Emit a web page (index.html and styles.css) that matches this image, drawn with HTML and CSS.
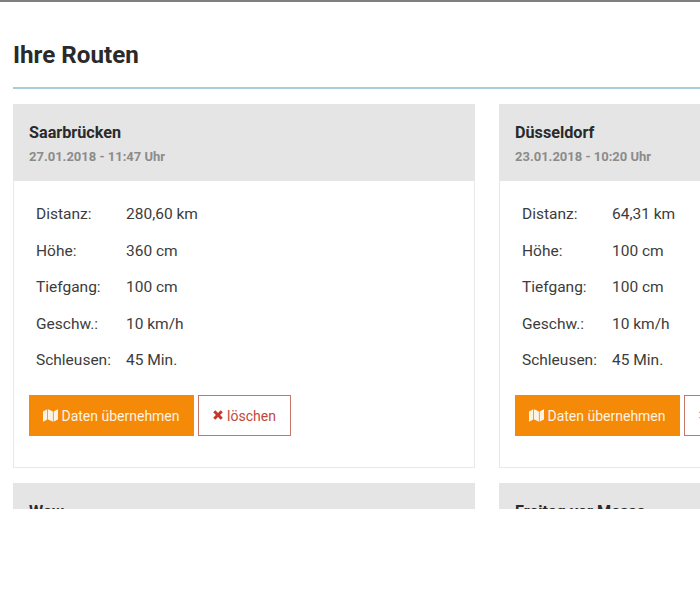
FILE: index.html
```html
<!DOCTYPE html>
<html lang="de">
<head>
<meta charset="utf-8">
<title>Ihre Routen</title>
<link rel="stylesheet" href="styles.css">
</head>
<body>
<main class="page">
  <h1 class="title">Ihre Routen</h1>
  <div class="grid">
    <article class="card">
      <header class="card-head"><h2>Saarbrücken</h2><p>27.01.2018 - 11:47 Uhr</p></header>
      <div class="card-body">
        <dl class="facts">
          <dt>Distanz:</dt><dd>280,60 km</dd>
          <dt>Höhe:</dt><dd>360 cm</dd>
          <dt>Tiefgang:</dt><dd>100 cm</dd>
          <dt>Geschw.:</dt><dd>10 km/h</dd>
          <dt>Schleusen:</dt><dd>45 Min.</dd>
        </dl>
        <div class="actions">
          <button class="btn primary"><svg class="icon-map" viewBox="0 0 15 13"><path d="M0 2.400C1.300 1.800 2.600 1 4.200.2v10.300C2.600 11.300 1.300 12.100 0 12.700zM5 .2C6.700.8 8.300 1.700 9.900 2.500v10.300C8.300 12 6.700 11.100 5 10.500zM10.700 2.500C12.200 1.700 13.600 .9 15 .2v10.300c-1.400.7-2.800 1.500-4.300 2.300z"/></svg><span class="label">Daten übernehmen</span></button>
          <button class="btn danger"><svg class="icon-x" viewBox="0 0 10 10"><path d="M2.300.2 5 2.900 7.700.2 9.800 2.300 7.100 5l2.700 2.700-2.100 2.100L5 7.100 2.300 9.800.2 7.700 2.900 5 .2 2.300z"/></svg><span class="label">löschen</span></button>
        </div>
      </div>
    </article>
    <article class="card">
      <header class="card-head"><h2>Düsseldorf</h2><p>23.01.2018 - 10:20 Uhr</p></header>
      <div class="card-body">
        <dl class="facts">
          <dt>Distanz:</dt><dd>64,31 km</dd>
          <dt>Höhe:</dt><dd>100 cm</dd>
          <dt>Tiefgang:</dt><dd>100 cm</dd>
          <dt>Geschw.:</dt><dd>10 km/h</dd>
          <dt>Schleusen:</dt><dd>45 Min.</dd>
        </dl>
        <div class="actions">
          <button class="btn primary"><svg class="icon-map" viewBox="0 0 15 13"><path d="M0 2.400C1.300 1.800 2.600 1 4.200.2v10.300C2.600 11.300 1.300 12.100 0 12.700zM5 .2C6.700.8 8.300 1.700 9.900 2.500v10.300C8.300 12 6.700 11.100 5 10.500zM10.700 2.500C12.200 1.700 13.600 .9 15 .2v10.300c-1.400.7-2.800 1.500-4.300 2.300z"/></svg><span class="label">Daten übernehmen</span></button>
          <button class="btn danger"><svg class="icon-x" viewBox="0 0 10 10"><path d="M2.300.2 5 2.900 7.700.2 9.800 2.300 7.100 5l2.700 2.700-2.100 2.100L5 7.100 2.300 9.800.2 7.700 2.900 5 .2 2.300z"/></svg><span class="label">löschen</span></button>
        </div>
      </div>
    </article>
    <article class="card">
      <header class="card-head"><h2>Wow</h2></header>
    </article>
    <article class="card">
      <header class="card-head"><h2>Freitag vor Messe</h2></header>
    </article>
  </div>
</main>
</body>
</html>
```

FILE: styles.css
```css
html, body {
  margin: 0;
  padding: 0;
  background: #fff;
}
body {
  font-family: Roboto, "Liberation Sans", sans-serif;
  color: #2a2a2a;
  width: 700px;
  height: 600px;
  overflow: hidden;
}
.page {
  box-sizing: border-box;
  height: 509px;
  overflow: hidden;
  border-top: 2px solid #7f7f7f;
  padding: 0 0 0 13px;
}
.title {
  margin: 0 0 15px;
  padding: 37px 0 16px;
  height: 32px;
  line-height: 32px;
  font-size: 24.200px;
  font-weight: 700;
  color: #2a2a2a;
  border-bottom: 2px solid #a9cddd;
}
.grid {
  display: grid;
  grid-template-columns: 462px 462px;
  column-gap: 24px;
  row-gap: 15px;
}
.card-head {
  background: #e5e5e5;
  height: 77px;
  box-sizing: border-box;
  padding: 19px 16px 0;
}
.card-head h2 {
  margin: 0;
  font-size: 16.200px;
  line-height: 20px;
  font-weight: 700;
  color: #2a2a2a;
}
.card-head p {
  margin: 6px 0 0;
  font-size: 13px;
  line-height: 16px;
  font-weight: 700;
  color: #8b8b8b;
}
.card-body {
  border: 1px solid #e8e8e8;
  border-top: 0;
  padding: 15px 15px 31px;
}
.facts {
  display: grid;
  grid-template-columns: 90px 1fr;
  grid-auto-rows: 36.500px;
  margin: 0 0 16px 7px;
  font-size: 15.500px;
  line-height: 36.500px;
  color: #3c3c3c;
}
.facts dt, .facts dd {
  margin: 0;
  font-weight: 400;
}
.actions {
  display: flex;
  gap: 4px;
}
.btn {
  height: 41px;
  box-sizing: border-box;
  display: flex;
  align-items: center;
  justify-content: center;
  font-family: inherit;
  font-size: 14px;
  padding: 0;
  border-radius: 0;
}
.label {
  padding-top: 2px;
}
.primary {
  width: 165px;
  background: #f48a07;
  border: 0;
  color: #fdf3e4;
}
.danger {
  width: 93px;
  background: #fff;
  border: 1px solid #c5766a;
  color: #c0483a;
}
.icon-map {
  width: 15px;
  height: 13px;
  fill: #fdf3e4;
  margin-right: 3px;
}
.icon-x {
  width: 10px;
  height: 10px;
  fill: #c0392b;
  margin-right: 4px;
}
```
